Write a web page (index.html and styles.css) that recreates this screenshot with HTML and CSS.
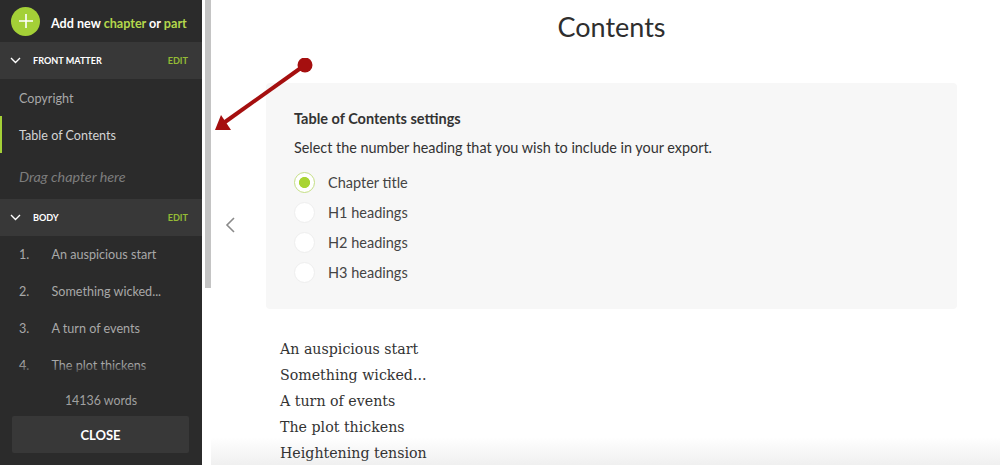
FILE: index.html
```html
<!DOCTYPE html>
<html lang="en">
<head>
    <meta charset="UTF-8">
    <meta name="viewport" content="width=device-width, initial-scale=1.0">
    <title>Contents</title>
    <link rel="stylesheet" href="styles.css">
</head>
<body>
    <aside class="sidebar">
        <div class="add-new">
            <span class="add-button">
                <svg width="16" height="16" viewBox="0 0 16 16"><path d="M8 1v14M1 8h14" stroke="#fff" stroke-width="1.6" fill="none"/></svg>
            </span>
            <span class="add-label">Add new <em>chapter</em> or <em>part</em></span>
        </div>

        <div class="chapters">
            <div class="section-head">
                <svg class="chevron" width="11" height="7" viewBox="0 0 11 7"><path d="M1 1l4.5 4.5L10 1" stroke="#fff" stroke-width="1.4" fill="none"/></svg>
                <span class="section-name">FRONT MATTER</span>
                <span class="edit">EDIT</span>
            </div>
            <div class="chapter plain">Copyright</div>
            <div class="chapter plain active">Table of Contents</div>
            <div class="drop-hint">Drag chapter here</div>

            <div class="section-head">
                <svg class="chevron" width="11" height="7" viewBox="0 0 11 7"><path d="M1 1l4.5 4.5L10 1" stroke="#fff" stroke-width="1.4" fill="none"/></svg>
                <span class="section-name">BODY</span>
                <span class="edit">EDIT</span>
            </div>
            <div class="chapter numbered"><span class="num">1.</span>An auspicious start</div>
            <div class="chapter numbered"><span class="num">2.</span>Something wicked...</div>
            <div class="chapter numbered"><span class="num">3.</span>A turn of events</div>
            <div class="chapter numbered"><span class="num">4.</span>The plot thickens</div>
        </div>

        <div class="sidebar-foot">
            <div class="word-count">14136 words</div>
            <button class="close-button">CLOSE</button>
        </div>
    </aside>

    <div class="scrollbar"><div class="scroll-thumb"></div></div>

    <main class="main">
        <div class="back-col">
            <svg width="10" height="16" viewBox="0 0 10 16"><path d="M9 1L2 8l7 7" stroke="#8a8a8a" stroke-width="1.6" fill="none"/></svg>
        </div>
        <div class="page">
            <h1>Contents</h1>
            <section class="settings">
                <h2>Table of Contents settings</h2>
                <p>Select the number heading that you wish to include in your export.</p>
                <div class="option"><span class="radio checked"></span>Chapter title</div>
                <div class="option"><span class="radio"></span>H1 headings</div>
                <div class="option"><span class="radio"></span>H2 headings</div>
                <div class="option"><span class="radio"></span>H3 headings</div>
            </section>
            <ul class="toc">
                <li>An auspicious start</li>
                <li>Something wicked...</li>
                <li>A turn of events</li>
                <li>The plot thickens</li>
                <li>Heightening tension</li>
            </ul>
        </div>
        <div class="fade"></div>
    </main>

    <svg class="arrow" width="110" height="80" viewBox="0 0 110 80">
        <path d="M91 7L11 64" stroke="#a50f0f" stroke-width="4" fill="none"/>
        <path d="M1 72L7 57L17 72Z" fill="#a50f0f"/>
        <circle cx="91" cy="7" r="7.5" fill="#a50f0f"/>
    </svg>
</body>
</html>
```

FILE: styles.css
```css
html, body {
    height: 100%;
}

body {
    margin: 0;
    display: flex;
    height: 465px;
    overflow: hidden;
    font-family: Lato, Arial, sans-serif;
    background-color: #ffffff;
    color: #333333;
}

.sidebar {
    width: 202px;
    flex-shrink: 0;
    display: flex;
    flex-direction: column;
    background-color: #2b2b2b;
    color: #ffffff;
}

.add-new {
    height: 42px;
    display: flex;
    align-items: center;
    gap: 11px;
    padding-left: 11px;
    font-size: 12.6px;
    font-weight: 700;
    flex-shrink: 0;
}

.add-label {
    padding-top: 4px;
}

.add-new em {
    font-style: normal;
    color: #b4d84c;
}

.add-button {
    width: 29px;
    height: 29px;
    border-radius: 50%;
    background-color: #a4d037;
    display: flex;
    align-items: center;
    justify-content: center;
}

.chapters {
    flex: 1;
    min-height: 0;
    overflow: hidden;
    position: relative;
}

.chapters::after {
    content: "";
    position: absolute;
    left: 0;
    right: 0;
    bottom: 0;
    height: 21px;
    background: linear-gradient(rgba(43, 43, 43, 0), #2b2b2b 55%);
}

.section-head {
    height: 37px;
    display: flex;
    align-items: center;
    padding: 0 14px 0 10px;
    background-color: #383838;
    font-size: 9.1px;
    font-weight: 700;
}

.chevron {
    margin-right: 12px;
}

.section-name {
    flex: 1;
}

.edit {
    color: #94bb35;
}

.chapter {
    height: 37px;
    box-sizing: border-box;
    display: flex;
    align-items: center;
    padding-left: 19px;
    font-size: 12.6px;
    color: #a8a8a8;
}

.chapter.plain {
    padding-top: 2px;
}

.chapter.active {
    color: #d4d4d4;
    box-shadow: inset 2px 0 0 #a4d037;
}

.num {
    width: 32.5px;
}

.drop-hint {
    height: 46px;
    display: flex;
    align-items: center;
    padding-left: 19px;
    font-size: 14.3px;
    font-style: italic;
    color: #7d7d7d;
}

.sidebar-foot {
    height: 80px;
    flex-shrink: 0;
    display: flex;
    flex-direction: column;
    align-items: center;
    background-color: #2b2b2b;
}

.word-count {
    height: 31px;
    display: flex;
    align-items: center;
    font-size: 12.4px;
    color: #a0a0a0;
}

.close-button {
    width: 177px;
    height: 37px;
    margin-right: 1px;
    border: 0;
    border-radius: 2px;
    background-color: #383838;
    color: #ffffff;
    font-family: Lato, Arial, sans-serif;
    font-size: 13px;
    font-weight: 700;
}

.scrollbar {
    width: 9px;
    flex-shrink: 0;
    padding-left: 3px;
    box-sizing: border-box;
}

.scroll-thumb {
    width: 6px;
    height: 288px;
    background-color: #c4c4c4;
}

.main {
    flex: 1;
    display: flex;
    position: relative;
}

.back-col {
    width: 55px;
    flex-shrink: 0;
    padding-top: 217px;
    padding-left: 14px;
    box-sizing: border-box;
}

.page {
    width: 691px;
    position: relative;
    z-index: 1;
}

h1 {
    margin: 10px 0 0;
    height: 73px;
    text-align: center;
    font-size: 27px;
    line-height: 34px;
    font-weight: 400;
    color: #2e2e2e;
}

.settings {
    height: 226px;
    box-sizing: border-box;
    padding: 26px 28px;
    background-color: #f7f7f7;
    border-radius: 4px;
}

h2 {
    margin: 0;
    font-size: 14.5px;
    line-height: 19px;
    font-weight: 700;
}

.settings p {
    margin: 10px 0 10px;
    font-size: 14.4px;
    line-height: 19px;
}

.option {
    height: 30px;
    display: flex;
    align-items: center;
    gap: 13px;
    font-size: 14.5px;
    color: #444444;
}

.radio {
    width: 21px;
    height: 21px;
    box-sizing: border-box;
    border-radius: 50%;
    background-color: #ffffff;
    border: 1px solid #eeeeee;
}

.radio.checked {
    border: 1px solid #c5df85;
    background: radial-gradient(circle, #a9d433 0 5.2px, #ffffff 5.9px);
}

.toc {
    list-style: none;
    margin: 27px 0 0;
    padding: 0 0 0 14px;
    font-family: "DejaVu Serif", serif;
    font-size: 14.2px;
    line-height: 26px;
    color: #333333;
}

.fade {
    position: absolute;
    left: 0;
    right: 0;
    bottom: 0;
    height: 28px;
    background: linear-gradient(rgba(238, 238, 238, 0), rgba(238, 238, 238, 0.9));
}

.arrow {
    position: absolute;
    left: 214px;
    top: 58px;
    z-index: 2;
}
```
